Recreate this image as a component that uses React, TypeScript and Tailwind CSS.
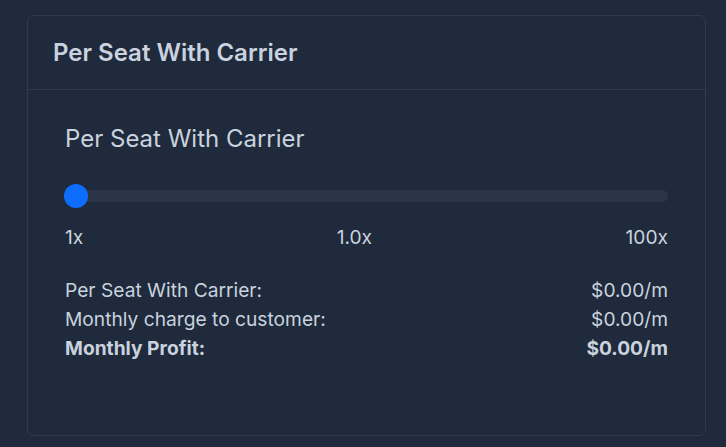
export default function App() {
  return (
    <div
      className="min-h-[447px] w-[726px] bg-[#1f2a3c] pt-[15px] pl-[27px] pr-[20px] pb-[11px]"
      style={{ fontFamily: 'Inter, "Noto Sans", sans-serif' }}
    >
      <div className="h-[421px] rounded-md border border-[#2e3a4d] bg-[#1f2a3c]">
        <div className="flex h-[74px] items-center border-b border-[#2e3a4d] px-[25px]">
          <h2 className="text-[24px] font-semibold leading-[29px] text-[#c9d2de]">Per Seat With Carrier</h2>
        </div>
        <div className="px-[37px] pt-[34px]">
          <h3 className="text-[24px] font-normal leading-[29px] text-[#c9d2de]">Per Seat With Carrier</h3>
          <div className="relative mt-[31px] h-[24px]">
            <div className="absolute left-0 right-0 top-[6px] h-[12px] rounded-full bg-[#2b3548]" />
            <div className="absolute left-[-1px] top-0 h-[24px] w-[24px] rounded-full bg-[#0d6efd]" />
          </div>
          <div className="mt-[15px] flex justify-between text-[19.2px] leading-[29px] text-[#c9d2de]">
            <span>1x</span>
            <span>1.0x</span>
            <span>100x</span>
          </div>
          <div className="mt-[24px] flex flex-col text-[19.2px] leading-[29px] text-[#c9d2de]">
            <div className="flex justify-between">
              <span>Per Seat With Carrier:</span>
              <span>$0.00/m</span>
            </div>
            <div className="flex justify-between">
              <span>Monthly charge to customer:</span>
              <span>$0.00/m</span>
            </div>
            <div className="flex justify-between font-bold">
              <span>Monthly Profit:</span>
              <span>$0.00/m</span>
            </div>
          </div>
        </div>
      </div>
    </div>
  );
}
